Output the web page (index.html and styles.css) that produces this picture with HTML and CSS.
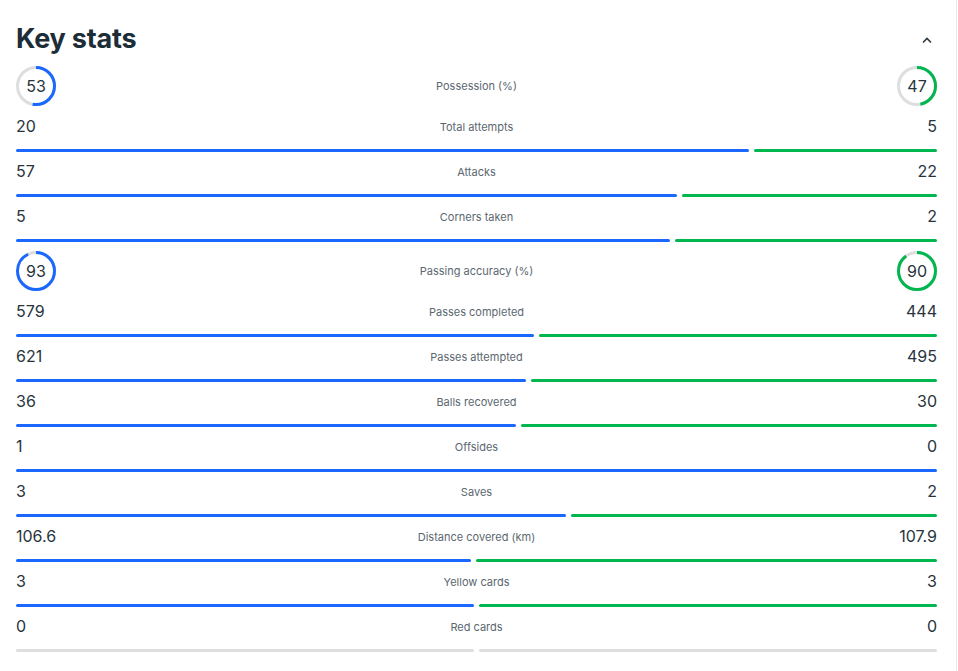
FILE: index.html
```html
<!DOCTYPE html>
<html lang="en">
<head>
<meta charset="utf-8">
<title>Key stats</title>
<link rel="stylesheet" href="styles.css">
</head>
<body>
<section class="card">
  <header class="card-header">
    <h2 class="title">Key stats</h2>
    <svg class="chevron" width="12" height="8" viewBox="0 0 12 8"><path d="M2 6.5 L6 2.5 L10 6.5" fill="none" stroke="#2b3a44" stroke-width="1.6"/></svg>
  </header>
  <div class="stats">
    <div class="row ring-row">
      <div class="ring"><svg width="40" height="40" viewBox="0 0 40 40"><circle cx="20" cy="20" r="18.5" class="track"/><circle cx="20" cy="20" r="18.5" class="arc home" pathLength="100" stroke-dasharray="53 100"/></svg><span>53</span></div>
      <div class="label">Possession (%)</div>
      <div class="ring"><svg width="40" height="40" viewBox="0 0 40 40"><circle cx="20" cy="20" r="18.5" class="track"/><circle cx="20" cy="20" r="18.5" class="arc away" pathLength="100" stroke-dasharray="47 100"/></svg><span>47</span></div>
    </div>
    <div class="row bar-row">
      <div class="line"><span class="num">20</span><span class="label">Total attempts</span><span class="num">5</span></div>
      <div class="bars"><i class="bar home" style="flex-grow:20"></i><i class="bar away" style="flex-grow:5"></i></div>
    </div>
    <div class="row bar-row">
      <div class="line"><span class="num">57</span><span class="label">Attacks</span><span class="num">22</span></div>
      <div class="bars"><i class="bar home" style="flex-grow:57"></i><i class="bar away" style="flex-grow:22"></i></div>
    </div>
    <div class="row bar-row">
      <div class="line"><span class="num">5</span><span class="label">Corners taken</span><span class="num">2</span></div>
      <div class="bars"><i class="bar home" style="flex-grow:5"></i><i class="bar away" style="flex-grow:2"></i></div>
    </div>
    <div class="row ring-row">
      <div class="ring"><svg width="40" height="40" viewBox="0 0 40 40"><circle cx="20" cy="20" r="18.5" class="track"/><circle cx="20" cy="20" r="18.5" class="arc home" pathLength="100" stroke-dasharray="93 100"/></svg><span>93</span></div>
      <div class="label">Passing accuracy (%)</div>
      <div class="ring"><svg width="40" height="40" viewBox="0 0 40 40"><circle cx="20" cy="20" r="18.5" class="track"/><circle cx="20" cy="20" r="18.5" class="arc away" pathLength="100" stroke-dasharray="90 100"/></svg><span>90</span></div>
    </div>
    <div class="row bar-row">
      <div class="line"><span class="num">579</span><span class="label">Passes completed</span><span class="num">444</span></div>
      <div class="bars"><i class="bar home" style="flex-grow:579"></i><i class="bar away" style="flex-grow:444"></i></div>
    </div>
    <div class="row bar-row">
      <div class="line"><span class="num">621</span><span class="label">Passes attempted</span><span class="num">495</span></div>
      <div class="bars"><i class="bar home" style="flex-grow:621"></i><i class="bar away" style="flex-grow:495"></i></div>
    </div>
    <div class="row bar-row">
      <div class="line"><span class="num">36</span><span class="label">Balls recovered</span><span class="num">30</span></div>
      <div class="bars"><i class="bar home" style="flex-grow:36"></i><i class="bar away" style="flex-grow:30"></i></div>
    </div>
    <div class="row bar-row">
      <div class="line"><span class="num">1</span><span class="label">Offsides</span><span class="num">0</span></div>
      <div class="bars"><i class="bar home" style="flex-grow:1"></i></div>
    </div>
    <div class="row bar-row">
      <div class="line"><span class="num">3</span><span class="label">Saves</span><span class="num">2</span></div>
      <div class="bars"><i class="bar home" style="flex-grow:3"></i><i class="bar away" style="flex-grow:2"></i></div>
    </div>
    <div class="row bar-row">
      <div class="line"><span class="num">106.6</span><span class="label">Distance covered (km)</span><span class="num">107.9</span></div>
      <div class="bars"><i class="bar home" style="flex-grow:106.6"></i><i class="bar away" style="flex-grow:107.9"></i></div>
    </div>
    <div class="row bar-row">
      <div class="line"><span class="num">3</span><span class="label">Yellow cards</span><span class="num">3</span></div>
      <div class="bars"><i class="bar home" style="flex-grow:3"></i><i class="bar away" style="flex-grow:3"></i></div>
    </div>
    <div class="row bar-row">
      <div class="line"><span class="num">0</span><span class="label">Red cards</span><span class="num">0</span></div>
      <div class="bars"><i class="bar empty" style="flex-grow:1"></i><i class="bar empty" style="flex-grow:1"></i></div>
    </div>
  </div>
</section>
</body>
</html>
```
FILE: styles.css
```css
* { box-sizing: border-box; }
html, body { margin: 0; padding: 0; background: #fff; }
body {
  font-family: Inter, "Noto Sans", "Liberation Sans", sans-serif;
  color: #27343d;
}
.card {
  width: 957px;
  height: 671px;
  padding: 22px 20px 0 16px;
  border-right: 1px solid #e6e8e9;
  overflow: hidden;
}
.card-header {
  height: 34px;
  margin-bottom: 10px;
  display: flex;
  align-items: center;
  justify-content: space-between;
}
.title {
  margin: 0;
  font-size: 27px;
  font-weight: 700;
  letter-spacing: -0.2px;
  color: #1c2d37;
  line-height: 34px;
}
.chevron { margin-right: 3px; margin-top: 2px; }
.stats {
  display: flex;
  flex-direction: column;
  gap: 9px;
}
.row { width: 921px; }
.ring-row {
  height: 40px;
  margin-bottom: 1px;
  display: flex;
  align-items: center;
  justify-content: space-between;
}
.ring {
  position: relative;
  width: 40px;
  height: 40px;
}
.ring svg { display: block; transform: rotate(-90deg); }
.ring span {
  position: absolute;
  inset: 0;
  display: flex;
  align-items: center;
  justify-content: center;
  font-size: 16px;
  color: #27343d;
}
.track { fill: none; stroke: #dcdedf; stroke-width: 3; }
.arc { fill: none; stroke-width: 3; }
.arc.home { stroke: #1a68ff; }
.arc.away { stroke: #00b74f; }
.label {
  font-size: 11px;
  color: #5b6770;
  text-align: center;
}
.ring-row .label { flex: 1; }
.line {
  height: 20px;
  display: grid;
  grid-template-columns: 1fr auto 1fr;
  align-items: center;
}
.line .label { padding-top: 2px; }
.num { font-size: 16px; color: #27343d; }
.num:last-child { text-align: right; }
.bars {
  margin-top: 13px;
  height: 3px;
  display: flex;
  gap: 5px;
}
.bar {
  display: block;
  flex-basis: 0;
  height: 3px;
  border-radius: 2px;
}
.bar.home { background: #1a68ff; }
.bar.away { background: #00b74f; }
.bar.empty { background: #dcdedf; }
```
